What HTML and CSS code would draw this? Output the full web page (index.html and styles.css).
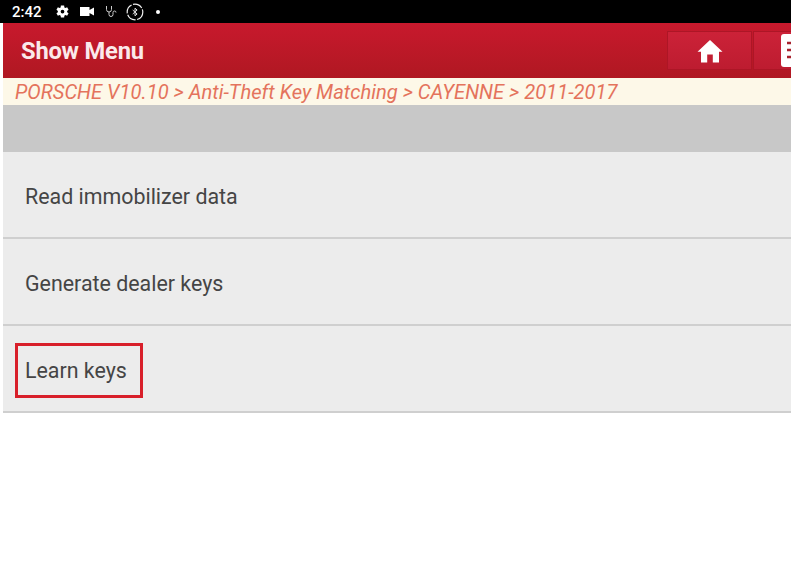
FILE: index.html
```html
<!DOCTYPE html>
<html lang="en">
<head>
    <meta charset="UTF-8">
    <meta name="viewport" content="width=device-width, initial-scale=1.0">
    <title>Show Menu</title>
    <link rel="stylesheet" href="styles.css">
</head>
<body>

    <div class="status-bar">
        <span class="clock">2:42</span>
        <!-- settings gear -->
        <svg class="st-icon gear" width="15" height="15" viewBox="0 0 24 24"><path fill="#fff" d="M19.4 13a7.5 7.5 0 0 0 0-2l2.3-1.8-2.3-3.9-2.7 1.1a7.5 7.5 0 0 0-1.700-1L14.600 2.500h-5.200L9 5.400a7.5 7.5 0 0 0-1.700 1L4.600 5.300 2.300 9.200 4.600 11a7.5 7.5 0 0 0 0 2l-2.300 1.800 2.300 3.900 2.700-1.100a7.5 7.5 0 0 0 1.700 1l.4 2.900h5.200l.4-2.900a7.5 7.5 0 0 0 1.700-1l2.700 1.100 2.300-3.900zM12 15a3 3 0 1 1 0-6 3 3 0 0 1 0 6z"/></svg>
        <!-- camera -->
        <svg class="st-icon camera" width="14" height="9" viewBox="0 0 14 9"><path fill="#fff" d="M0 0h9.500v3L14 .5v8L9.500 6v3H0z"/></svg>
        <!-- stethoscope -->
        <svg class="st-icon scope" width="13" height="13" viewBox="0 0 13 13"><path fill="none" stroke="#ccc" stroke-width="1" d="M1.500 1v3.500a2.500 2.500 0 0 0 5 0V1M4 7v2.500a2 2 0 0 0 4 0V7.500a1.500 1.500 0 0 1 3 0"/></svg>
        <!-- bluetooth in ring -->
        <svg class="st-icon ring" width="18" height="18" viewBox="0 0 18 18"><circle cx="9" cy="9" r="7.800" fill="none" stroke="#eee" stroke-width="1.200" stroke-dasharray="10 1.500"/><path fill="none" stroke="#ddd" stroke-width="1" d="M6.700 7l4.400 4L9 12.800V5.200l2.100 1.800-4.400 4"/></svg>
        <span class="dot"></span>
    </div>

    <div class="page">
        <header class="top-bar">
            <h1 class="top-title">Show Menu</h1>
            <button class="top-btn" aria-label="Home">
                <svg width="26" height="24" viewBox="0 0 26 24"><path fill="#fff" d="M13 1 L25.500 12.800 H22 V23.500 H15.800 V15.500 H10.200 V23.500 H4 V12.800 H.5 Z"/></svg>
            </button>
            <button class="top-btn" aria-label="Report">
                <svg width="26" height="33" viewBox="0 0 26 33"><rect width="26" height="33" rx="3" fill="#fff"/><path fill="none" stroke="#a8222e" stroke-width="2.500" d="M6 9h16M6 16h10M6 23h16"/></svg>
            </button>
        </header>

        <div class="breadcrumb">PORSCHE V10.10 &gt; Anti-Theft Key Matching &gt; CAYENNE &gt; 2011-2017</div>
        <div class="gray-bar"></div>

        <ul class="menu">
            <li class="menu-item"><span>Read immobilizer data</span></li>
            <li class="menu-item"><span>Generate dealer keys</span></li>
            <li class="menu-item"><span class="marked">Learn keys</span></li>
        </ul>
    </div>

</body>
</html>
```

FILE: styles.css
```css
* {
    margin: 0;
    padding: 0;
    box-sizing: border-box;
}

html, body {
    height: 100%;
    overflow: hidden;
}

body {
    font-family: Roboto, "Liberation Sans", sans-serif;
    background: #fff;
    color: #444;
}

.status-bar {
    height: 23px;
    background: #000;
    color: #fff;
    display: flex;
    align-items: center;
    padding-left: 12px;
}

.clock {
    font-size: 15px;
    font-weight: 500;
    margin-right: 13px;
}

.st-icon {
    flex-shrink: 0;
}

.gear {
    margin-right: 10px;
}

.camera {
    margin-right: 11px;
}

.scope {
    margin-right: 8px;
}

.ring {
    margin-right: 12px;
}

.dot {
    width: 4px;
    height: 4px;
    border-radius: 50%;
    background: #fff;
}

.page {
    margin-left: 3px;
}

.top-bar {
    height: 55px;
    background: linear-gradient(to bottom, #c8192d, #b01822);
    display: flex;
    align-items: center;
    overflow: hidden;
}

.top-title {
    flex: 0 0 664px;
    padding: 1px 0 0 18px;
    font-size: 23.7px;
    font-weight: 700;
    letter-spacing: -0.2px;
    color: #fbe9ea;
}

.top-btn {
    flex: 0 0 85px;
    height: 39px;
    margin-right: 1px;
    background: linear-gradient(to bottom, #cc2238, #bd1c30);
    border: 1px solid #ad1626;
    display: flex;
    align-items: center;
    justify-content: center;
}

.top-btn:last-child {
    justify-content: flex-start;
    padding-left: 27px;
}

.breadcrumb {
    height: 27px;
    line-height: 29px;
    padding-left: 12px;
    background: #fdf8e8;
    color: #e4735c;
    font-size: 20.15px;
    font-style: italic;
    white-space: nowrap;
}

.gray-bar {
    height: 47px;
    background: #c8c8c8;
}

.menu {
    list-style: none;
}

.menu-item {
    height: 87px;
    background: #ececec;
    border-bottom: 2px solid #cfcfcf;
    display: flex;
    align-items: center;
    padding: 4px 0 0 22px;
    font-size: 21.4px;
    color: #454545;
}

.marked {
    position: relative;
}

/* red box drawn over the screenshot */
.marked::after {
    content: "";
    position: absolute;
    left: -10px;
    right: -16px;
    top: -15px;
    bottom: -15px;
    border: 3px solid #d81f2a;
}
```
